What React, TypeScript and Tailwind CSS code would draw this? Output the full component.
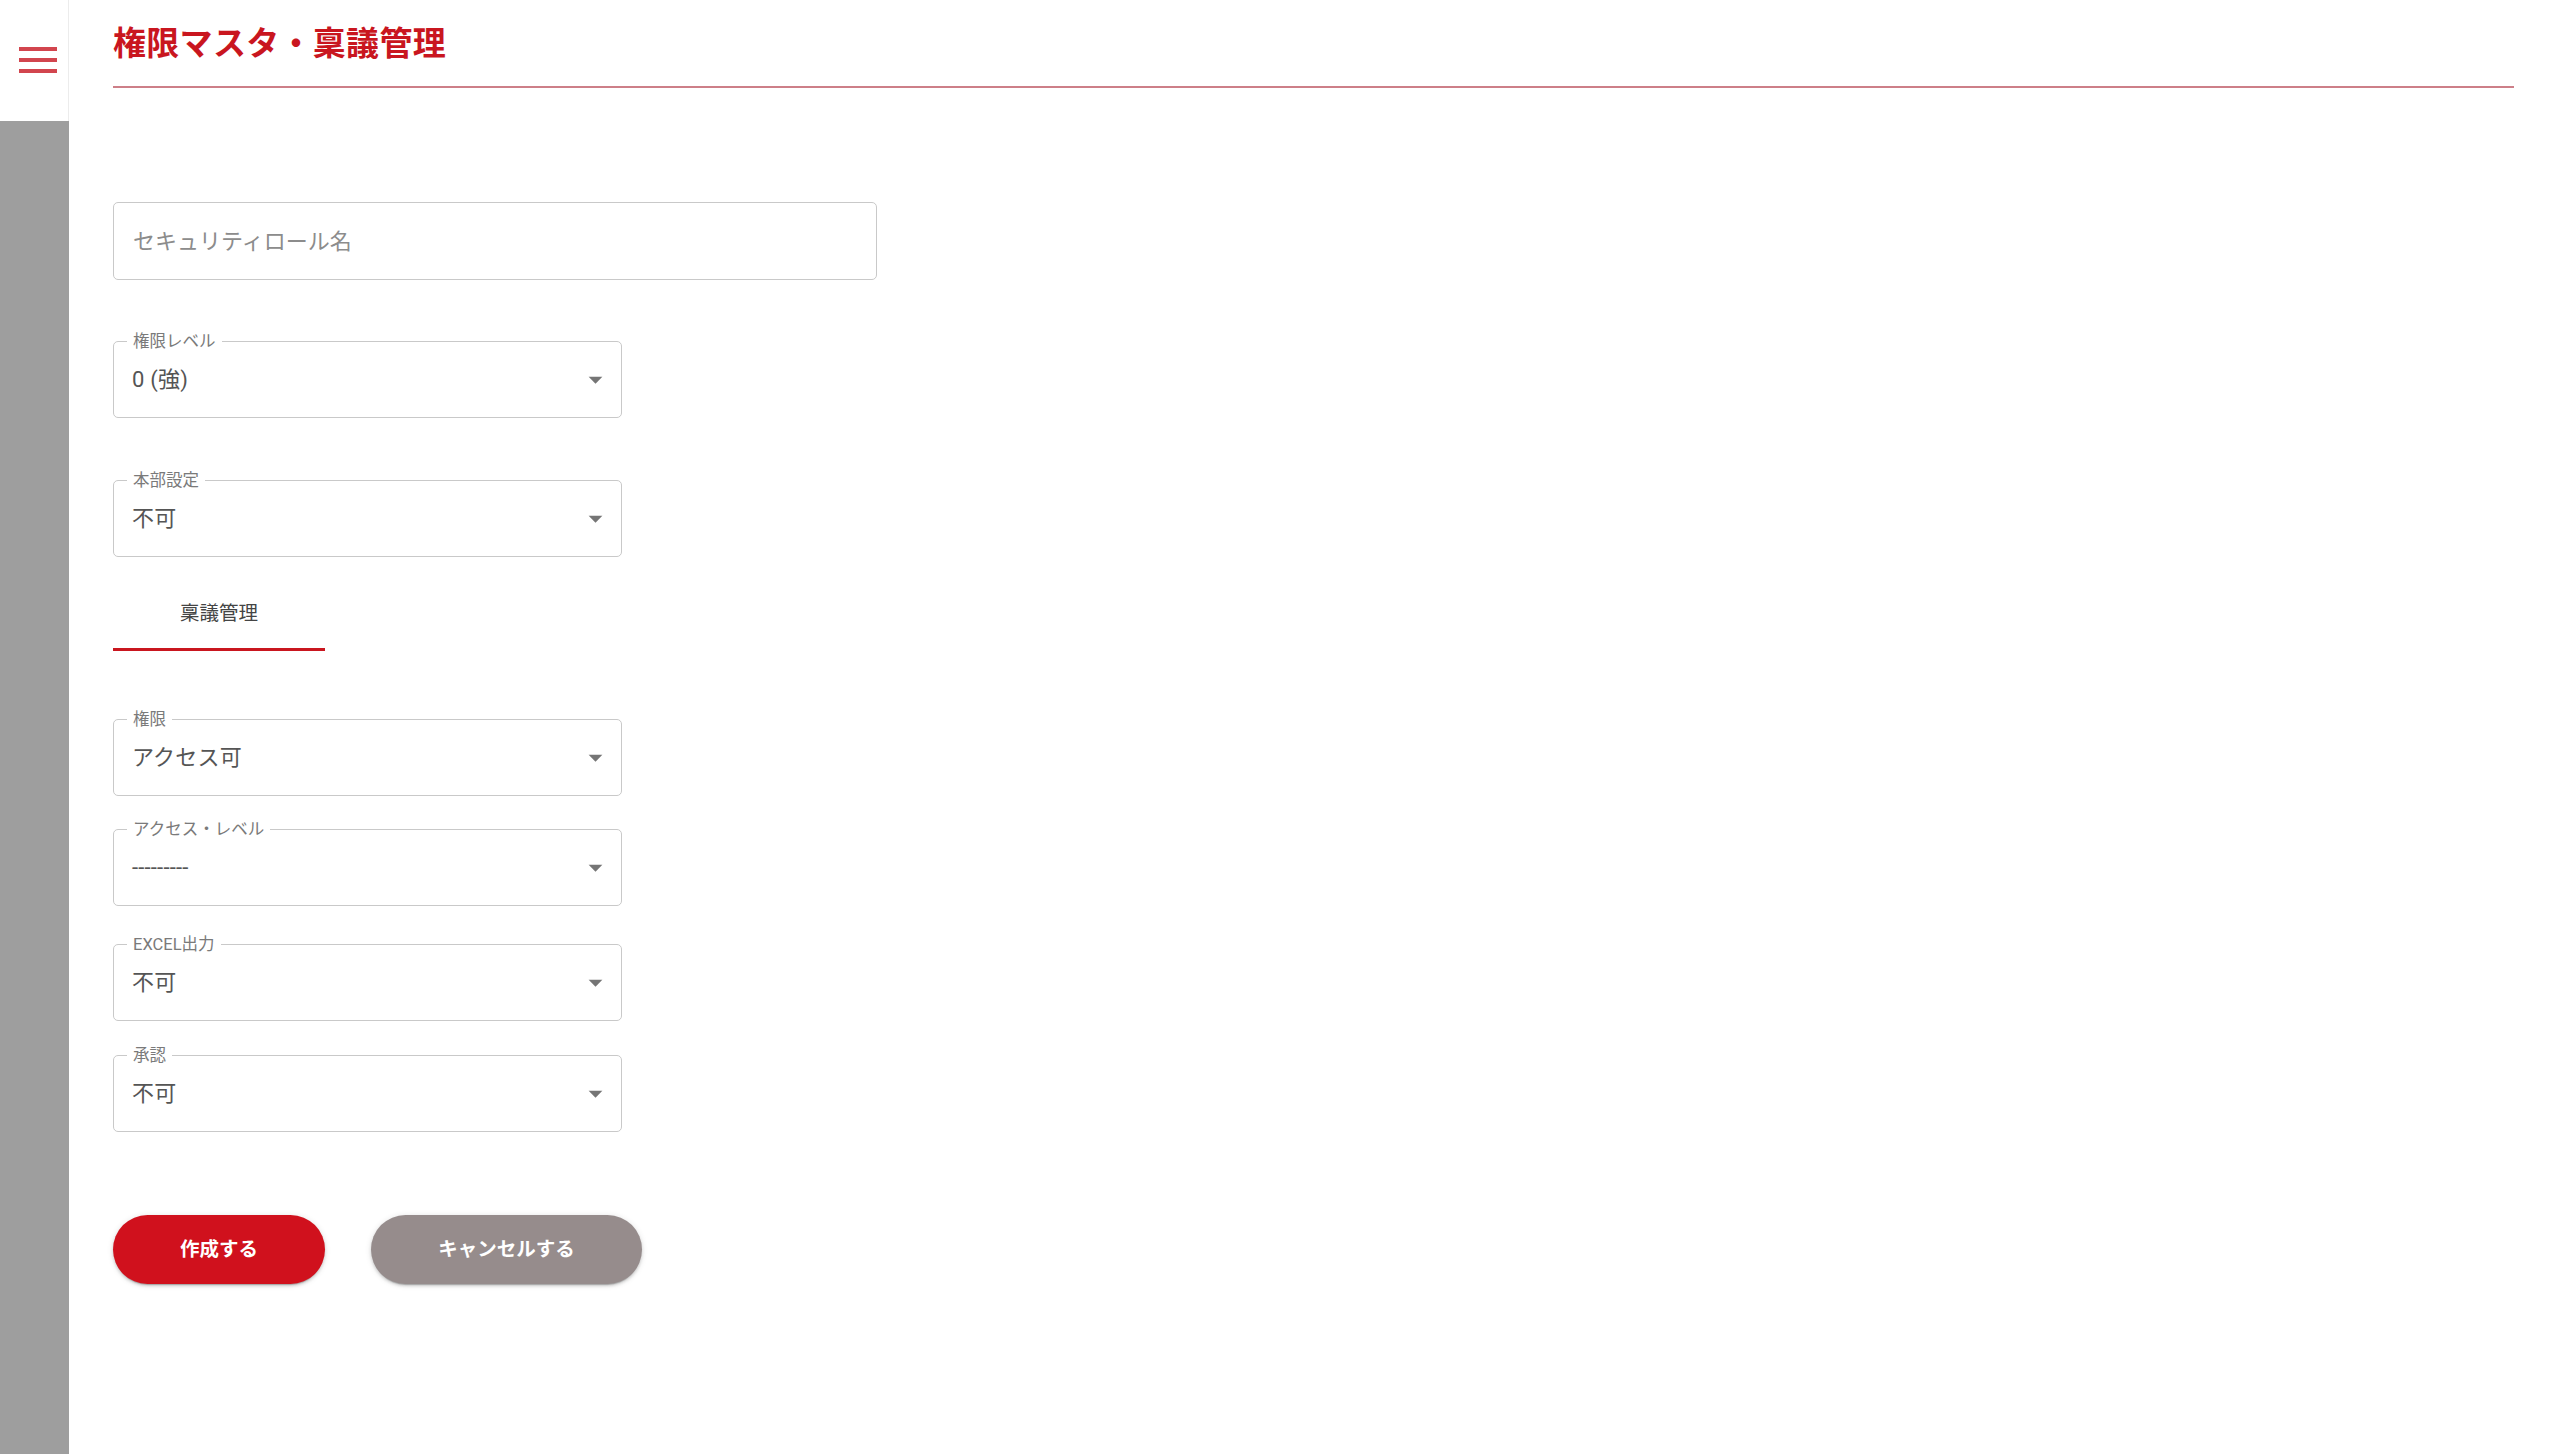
import React from 'react';

const FONT = 'font-[Roboto,"Noto_Sans_CJK_JP",sans-serif]';

function ArrowDrop() {
  return (
    <svg viewBox="0 0 24 24" className="w-[33px] h-[33px] fill-[#757575]">
      <path d="M7 10l5 5 5-5z" />
    </svg>
  );
}

function SelectBox({ label, value, className = '' }: { label: string; value: string; className?: string }) {
  return (
    <div className={`relative h-[77px] w-[509px] rounded-[5px] border border-[#c9c9c9] flex items-center pl-[18px] pr-[9px] ${className}`}>
      <span className="absolute left-[13px] top-0 -translate-y-1/2 bg-white px-[6px] text-[16.5px] leading-[20px] text-[#7a7a7a]">
        {label}
      </span>
      <span className="flex-1 pt-[1px] text-[22px] leading-[30px] text-[#555] tracking-[0.2px]">{value}</span>
      <ArrowDrop />
    </div>
  );
}

export default function App() {
  return (
    <div className={`flex h-[1454px] w-full bg-white ${FONT}`}>
      {/* Side rail */}
      <aside className="w-[69px] shrink-0 flex flex-col">
        <div className="h-[121px] border-r border-[#ececec] bg-white">
          <div className="pt-[47px] pl-[19px] flex flex-col gap-[7px]">
            <span className="block h-[4px] w-[38px] bg-[#d2454e]" />
            <span className="block h-[4px] w-[38px] bg-[#d2454e]" />
            <span className="block h-[4px] w-[38px] bg-[#d2454e]" />
          </div>
        </div>
        <div className="flex-1 bg-[#9e9e9e]" />
      </aside>

      {/* Main */}
      <main className="flex-1 pl-[44px] pr-[46px]">
        <header className="pt-[19px] pb-[17px] border-b-2 border-[#cd7f88]">
          <h1 className="text-[33px] leading-[50px] font-bold text-[#c9161f] tracking-[0.3px]">権限マスタ・稟議管理</h1>
        </header>

        <div className="flex flex-col">
          <div className="mt-[114px] h-[78px] w-[764px] rounded-[5px] border border-[#c9c9c9] flex items-center pl-[19px]">
            <span className="pt-[2px] text-[22px] leading-[30px] text-[#8c8c8c]">セキュリティロール名</span>
          </div>

          <SelectBox className="mt-[61px]" label="権限レベル" value="0 (強)" />
          <SelectBox className="mt-[62px]" label="本部設定" value="不可" />

          <div className="mt-[28px] w-[212px] flex flex-col">
            <div className="h-[63px] flex items-center justify-center pb-[6px] text-[19.5px] text-[#444]">稟議管理</div>
            <div className="h-[3px] bg-[#c9161f]" />
          </div>

          <SelectBox className="mt-[68px]" label="権限" value="アクセス可" />
          <SelectBox className="mt-[33px]" label="アクセス・レベル" value="---------" />
          <SelectBox className="mt-[38px]" label="EXCEL出力" value="不可" />
          <SelectBox className="mt-[34px]" label="承認" value="不可" />

          <div className="mt-[83px] flex gap-[46px]">
            <button className="h-[69px] w-[212px] rounded-full bg-[#d0111d] text-white text-[19.5px] font-bold shadow-[0_3px_1px_-2px_rgba(0,0,0,0.2),0_2px_3px_0_rgba(0,0,0,0.14),0_1px_6px_0_rgba(0,0,0,0.12)]">
              作成する
            </button>
            <button className="h-[69px] w-[271px] rounded-full bg-[#968c8c] text-white text-[19.5px] font-bold shadow-[0_3px_1px_-2px_rgba(0,0,0,0.2),0_2px_3px_0_rgba(0,0,0,0.14),0_1px_6px_0_rgba(0,0,0,0.12)]">
              キャンセルする
            </button>
          </div>
        </div>
      </main>
    </div>
  );
}
